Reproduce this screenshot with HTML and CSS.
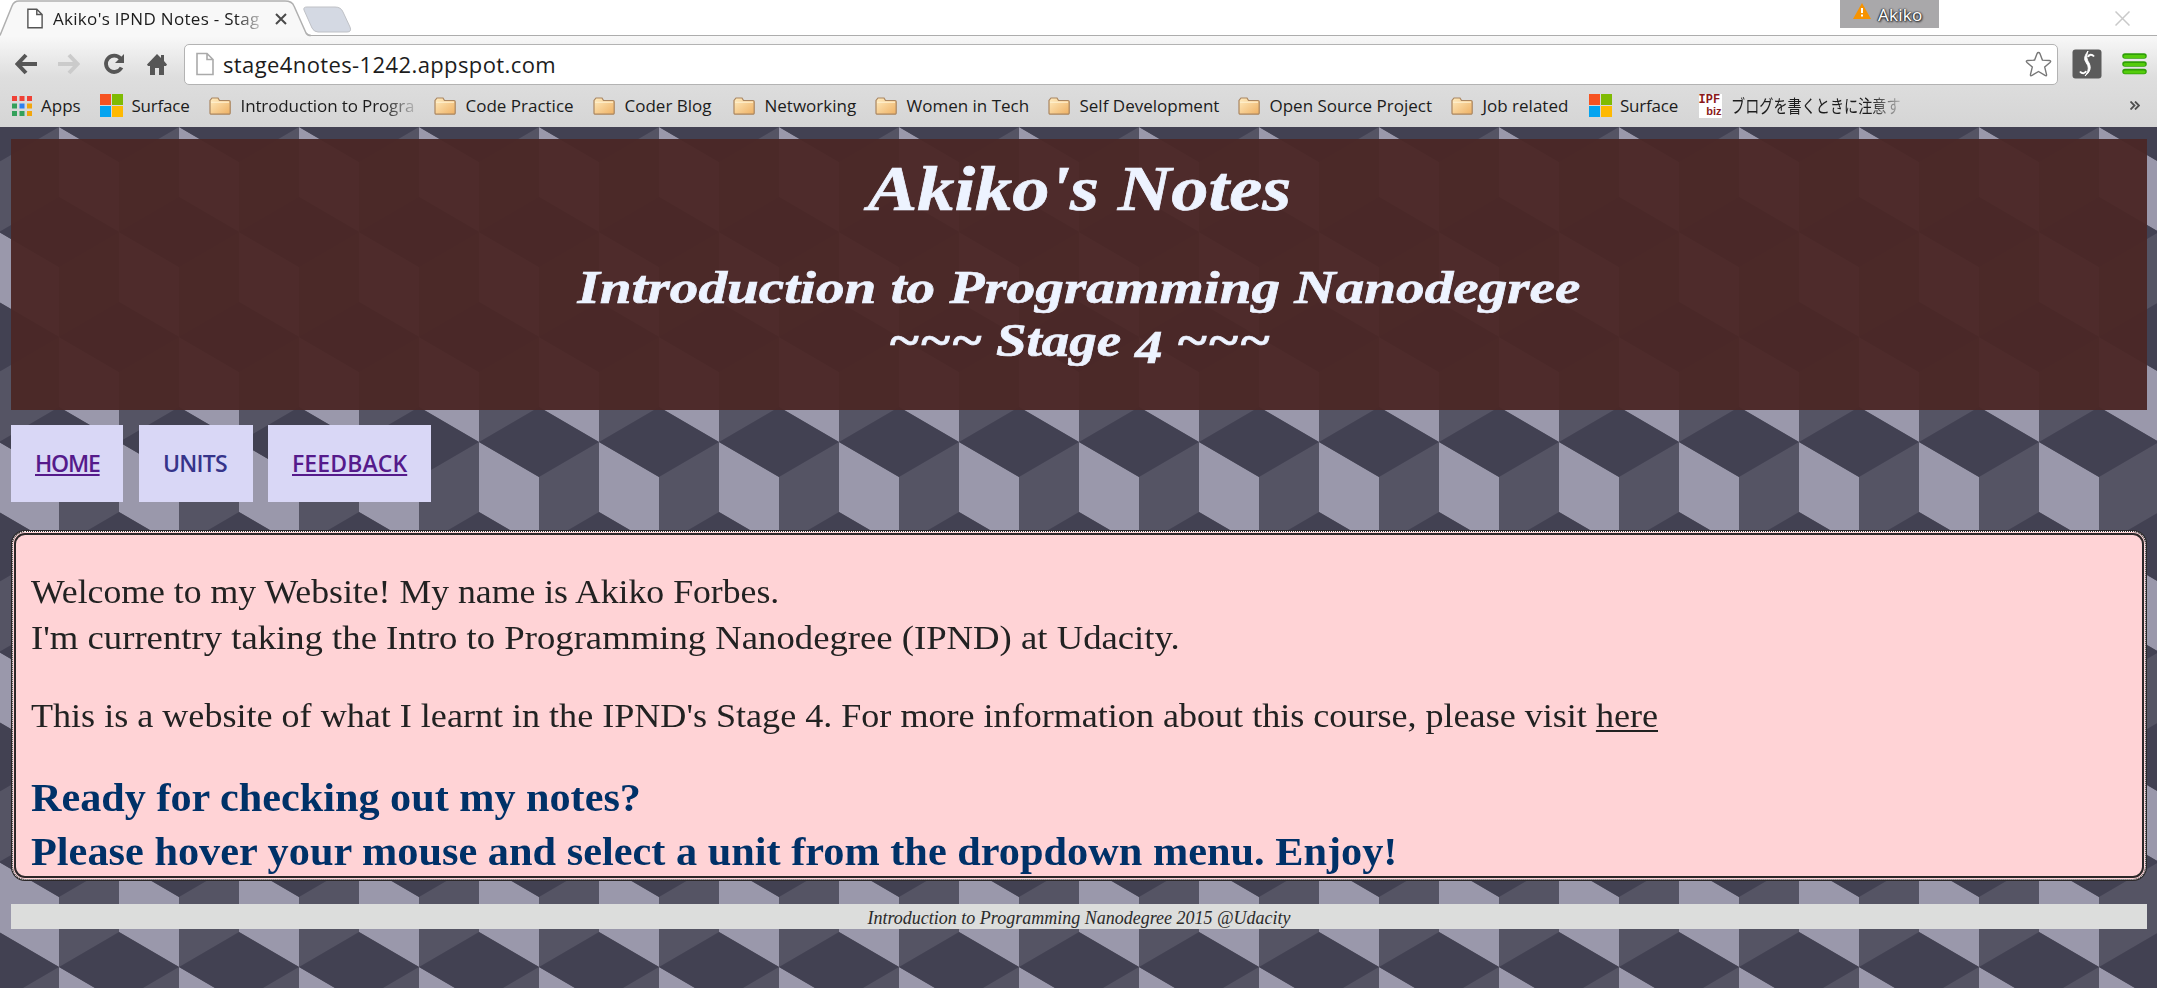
FILE: index.html
```
<!DOCTYPE html>
<html lang="en">
<head>
<meta charset="utf-8">
<title>Akiko's IPND Notes - Stage 4</title>
<link rel="stylesheet" href="styles.css">
</head>
<body>
<svg width="0" height="0" class="defs">
  <defs>
    <linearGradient id="fold" x1="0" y1="0" x2="1" y2="1"><stop offset="0" stop-color="#ffecc0"/><stop offset="1" stop-color="#eeb063"/></linearGradient>
    <symbol id="folder" viewBox="0 0 22 18"><path d="M1 16V3.5L3 1h6l1.5 2.5H20a1.2 1.2 0 0 1 1.2 1.2V16a1.2 1.2 0 0 1-1.2 1.2H2.2A1.2 1.2 0 0 1 1 16z" fill="url(#fold)" stroke="#a98560" stroke-width="1.2"/><path d="M2 5.2h18" stroke="#fff3d5" stroke-width="1"/></symbol>
    <symbol id="windows" viewBox="0 0 23 23"><path fill="#f65321" d="M0 0h11v11H0z"/><path fill="#7fbb03" d="M12 0h11v11H12z"/><path fill="#04a4f0" d="M0 12h11v11H0z"/><path fill="#feb902" d="M12 12h11v11H12z"/></symbol>
    <symbol id="page" viewBox="0 0 18 23"><path d="M1 1h10l6 6v15H1z M11 1v6h6" fill="#fff" stroke="currentColor" stroke-width="1.6"/></symbol>
  </defs>
</svg>

<div class="tabstrip">
  <svg class="tabshape" width="356" height="37" viewBox="0 0 356 37">
    <path d="M304 10q-1-3 3-3h28q6 0 8 5l7 15q2 5-3 5h-29q-4 0-6-4z" fill="#d4d9e3" stroke="#bfc1c6" stroke-width="1"/>
    <path d="M0 37V35.500L12 6q2-5 7-5h266q7 0 9 5l12 27q1.500 2.500 5 2.500V37z" fill="#f8f8f8"/>
    <path d="M0 35.500L12 6q2-5 7-5h266q7 0 9 5l12 27q1.500 2.500 5 2.500" fill="none" stroke="#b0b0b0" stroke-width="1.500"/>
  </svg>
  <div class="tab">
    <svg class="tabicon" width="16" height="21"><use href="#page"/></svg>
    <span class="tabtitle">Akiko's IPND Notes - Stag</span>
    <svg width="12" height="12" viewBox="0 0 12 12"><path d="M1 1l10 10M11 1L1 11" stroke="#4a4a4a" stroke-width="2"/></svg>
  </div>
  <div class="profile">
    <svg width="18" height="16" viewBox="0 0 18 16"><path d="M9 0l9 16H0z" fill="#f79300"/><path d="M9 5v5M9 11.500v2" stroke="#fff" stroke-width="2"/></svg>
    <span>Akiko</span>
  </div>
  <svg class="winclose" width="15" height="15" viewBox="0 0 15 15"><path d="M.5.5l14 14M14.500.5l-14 14" stroke="#c9c9c9" stroke-width="1.500"/></svg>
</div>

<div class="chrome">
  <div class="toolbar">
    <svg width="23" height="22" viewBox="0 0 23 22"><path d="M22 11H3M11 2L2.500 11l8.500 9" fill="none" stroke="#565656" stroke-width="4"/></svg>
    <svg width="23" height="22" viewBox="0 0 23 22"><path d="M1 11h19M12 2l8.500 9-8.500 9" fill="none" stroke="#cbcbcb" stroke-width="4"/></svg>
    <svg width="22" height="22" viewBox="0 0 22 22"><path d="M17.500 5.500A8.200 8.200 0 1 0 18.500 14.500" fill="none" stroke="#565656" stroke-width="3.800"/><path d="M21 1v9h-9z" fill="#565656"/></svg>
    <svg width="20" height="21" viewBox="0 0 20 21"><path d="M10 0l4 4V1h3v6l3 3.500-1 1.500h-2v9h-5v-7H8v7H3v-9H1l-1-1.500z" fill="#565656"/></svg>
    <div class="omnibox">
      <svg class="pageicon" width="18" height="24"><use href="#page"/></svg>
      <span class="url">stage4notes-1242.appspot.com</span>
      <svg class="star" width="27" height="27" viewBox="0 0 27 27"><path d="M13.500 1.500q1 0 1.400 1l2.500 6.600 7 .4q2.200.3.600 1.900l-5.300 4.700 1.800 7.200q.4 2-1.500 1.100L13.500 20.500 7 24.400q-1.900.9-1.500-1.100l1.800-7.200L2 11.400Q.4 9.800 2.600 9.500l7-.4 2.500-6.600q.4-1 1.400-1z" fill="#fff" stroke="#777" stroke-width="1.400"/></svg>
    </div>
    <svg class="ext" width="30" height="30" viewBox="0 0 30 30"><rect x=".5" y=".5" width="29" height="29" rx="3" fill="#5b5b5b"/><path d="M16 2c-5 7-3.500 9-1 13s1 8-2 12c5-4 6.500-8 4-13-2.300-4-3-6-1-12z" fill="#fff" stroke="#fff"/><path d="M16 8c1-3 4-3 6-.5M14 22c-1 3-4 3-6 .5" stroke="#fff" stroke-width="2" fill="none"/></svg>
    <svg width="25" height="22" viewBox="0 0 25 22"><path d="M3 3h19M3 11h19M3 18.500h19" stroke="#2f9e07" stroke-width="5.500" stroke-linecap="round"/><path d="M3 3.500h19M3 11.500h19M3 19h19" stroke="#55cc0c" stroke-width="3" stroke-linecap="round"/></svg>
  </div>

  <div class="bookmarks">
    <div class="bm apps"><svg width="20" height="20" viewBox="0 0 20 20"><path fill="#ef4136" d="M0 0h5v5H0zM7.500 0h5v5h-5zM15 0h5v5h-5z"/><path fill="#34a05a" d="M0 7.500h5v5H0zM0 15h5v5H0zM7.500 15h5v5h-5z"/><path fill="#2d7ff0" d="M7.500 7.500h5v5h-5z"/><path fill="#f2a60d" d="M15 7.500h5v5h-5zM15 15h5v5h-5z"/></svg>Apps</div>
    <div class="bm win"><svg width="23" height="23"><use href="#windows"/></svg>Surface</div>
    <div class="bm"><svg width="22" height="18"><use href="#folder"/></svg><span class="fade intro">Introduction to Progra</span></div>
    <div class="bm"><svg width="22" height="18"><use href="#folder"/></svg>Code Practice</div>
    <div class="bm"><svg width="22" height="18"><use href="#folder"/></svg>Coder Blog</div>
    <div class="bm"><svg width="22" height="18"><use href="#folder"/></svg>Networking</div>
    <div class="bm"><svg width="22" height="18"><use href="#folder"/></svg>Women in Tech</div>
    <div class="bm"><svg width="22" height="18"><use href="#folder"/></svg>Self Development</div>
    <div class="bm"><svg width="22" height="18"><use href="#folder"/></svg>Open Source Project</div>
    <div class="bm"><svg width="22" height="18"><use href="#folder"/></svg>Job related</div>
    <div class="bm win"><svg width="23" height="23"><use href="#windows"/></svg>Surface</div>
    <div class="bm"><span class="ipf"><b>IPF</b><b class="biz">biz</b></span><span class="fade jp">ブログを書くときに注意す</span></div>
    <svg class="more" width="10" height="9" viewBox="0 0 10 9"><path d="M.5.5l4 4-4 4M5 .5l4 4-4 4" fill="none" stroke="#4f4f4f" stroke-width="1.800"/></svg>
  </div>
</div>

<main class="site">
  <header class="banner">
    <h1><span class="sx-title">Akiko's Notes</span></h1>
    <h2><span class="sx-course">Introduction to Programming Nanodegree</span><br><span class="sx-stage">~~~ Stage <span class="old">4</span> ~~~</span></h2>
  </header>
  <nav class="menu">
    <div class="item home"><a>HOME</a></div>
    <div class="item units"><span>UNITS</span></div>
    <div class="item feedback"><a>FEEDBACK</a></div>
  </nav>
  <section class="panel">
    <p><span class="l1">Welcome to my Website! My name is Akiko Forbes.</span><br><span class="l2">I'm currentry taking the Intro to Programming Nanodegree (IPND) at Udacity.</span></p>
    <p><span class="l3">This is a website of what I learnt in the IPND's Stage 4. For more information about this course, please visit <u>here</u></span></p>
    <h3><span class="l4">Ready for checking out my notes?</span><br><span class="l5">Please hover your mouse and select a unit from the dropdown menu. Enjoy!</span></h3>
  </section>
  <footer class="foot">Introduction to Programming Nanodegree 2015 @Udacity</footer>
</main>
</body>
</html>
```
FILE: styles.css
```
* { box-sizing: border-box; }
body { margin: 0; width: 2157px; height: 988px; overflow: hidden; display: flex; flex-direction: column; background: #fff; font-family: "Open Sans", sans-serif; color: #1c1c1c; }
svg { display: block; flex: none; }
.defs { position: absolute; }

.tabstrip { height: 36px; flex: none; display: flex; position: relative; border-bottom: 1.5px solid #adadad; }
.tabshape { position: absolute; left: 0; top: 0; }
.tab { position: relative; display: flex; align-items: center; width: 300px; height: 37px; padding-left: 27px; }
.tabicon { color: #555; }
.tabtitle { width: 213px; margin: 0 9px 0 10px; font-size: 17px; letter-spacing: .3px; white-space: nowrap; overflow: hidden; mask-image: linear-gradient(90deg, #000 86%, rgba(0,0,0,.25) 97%); }
.profile { margin-left: 1540px; width: 99px; height: 28px; background: #a9a8aa; display: flex; align-items: center; padding: 0 0 0 13px; gap: 7px; color: #fff; font-size: 17px; letter-spacing: .3px; text-shadow: 0 0 2px #222, 1px 1px 2px #222, -1px 0 1px #444; }
.profile svg { margin-bottom: 6px; }
.profile span { padding-top: 1px; }
.winclose { margin: 11px 0 0 176px; }

.chrome { height: 91px; flex: none; background: linear-gradient(#f8f8f8, #dedede 45%, #d5d5d5); display: flex; flex-direction: column; }
.toolbar { display: flex; align-items: center; height: 56px; padding: 0 10px 0 15px; }
.toolbar > svg:nth-child(2) { margin-left: 19px; }
.toolbar > svg:nth-child(3) { margin-left: 23px; }
.toolbar > svg:nth-child(4) { margin-left: 22px; }
.omnibox { display: flex; align-items: center; width: 1875px; height: 41px; margin: 0 14px 0 17px; padding: 0 5px 0 11px; background: #fff; border: 1px solid #b3b3b3; border-radius: 5px; }
.pageicon { color: #aaa; }
.url { flex: 1; margin-left: 9px; font-size: 22px; letter-spacing: .39px; line-height: 38px; }
.toolbar .ext { margin-right: 20px; }

.bookmarks { display: grid; grid-template-columns: 88px 109px 225px 159px 140px 142px 173px 190px 213px 137.5px 110px 431.500px auto; align-items: center; height: 27px; padding: 0 0 0 12px; font-size: 17px; white-space: nowrap; }
.bm { display: flex; align-items: center; height: 25px; gap: 9.5px; line-height: 25px; }
.bm.apps { gap: 9px; }
.bm.win { gap: 8.5px; letter-spacing: -.2px; }
.fade { mask-image: linear-gradient(90deg, #000 82%, rgba(0,0,0,.2) 100%); }
.intro { letter-spacing: -.12px; }
.jp { font-family: "Noto Sans CJK JP", sans-serif; font-size: 18px; transform: scaleX(.785); transform-origin: left; }
.ipf { width: 23px; height: 24px; background: #fff; color: #8a1a1a; font-family: "Liberation Mono", monospace; font-size: 12px; line-height: 12px; display: flex; flex-direction: column; }
.ipf .biz { font-family: "Liberation Sans", sans-serif; align-self: flex-end; font-size: 11px; line-height: 11px; }

.site { flex: 1; padding: 12px 10px 0 11px; background: url("data:image/svg+xml,%3Csvg xmlns='http://www.w3.org/2000/svg' width='120' height='210'%3E%3Cpath fill='%23555464' d='M0 0h120v210H0z'/%3E%3Cpath fill='%239a98ab' d='M0 105l60 35v70L0 175zM60 0l60 35v70L60 70z'/%3E%3Cpath fill='%23424152' d='M0 105l60-35 60 35-60 35zM-60 0H60L0 35zM60 0h120l-60 35zM0 175l60 35H-60zM120 175l60 35H60z'/%3E%3C/svg%3E") -1px 0; }
.banner { height: 271px; padding-top: 15px; background: rgba(75,39,38,.965); color: #edf3ff; text-align: center; font-family: "Liberation Serif", serif; font-style: italic; -webkit-text-stroke: .7px #edf3ff; }
.banner h1, .banner h2, .panel h3, .panel p { margin: 0; }
.banner h1 { font-size: 63px; line-height: 70px; }
.banner h2 { margin-top: 37px; font-size: 47px; line-height: 52.5px; }
.banner h1 > span, .banner h2 > span, .panel p > span, .panel h3 > span { display: inline-block; white-space: nowrap; }
.sx-title { transform: scaleX(1.18); }
.sx-course { transform: scaleX(1.217); }
.sx-stage { transform: scaleX(1.17); }
.old { vertical-align: -7px; line-height: 0; }

.menu { display: flex; margin-top: 15px; height: 77px; font-size: 23px; font-weight: 600; color: #36348a; }
.item { background: #d9d7f6; padding: 0 0 1px 24px; line-height: 76px; }
.home { width: 112px; letter-spacing: -1.2px; }
.units { width: 114px; margin-left: 16px; letter-spacing: -.75px; }
.feedback { width: 163px; margin-left: 15px; letter-spacing: .1px; }
.item a { color: #551a8b; text-decoration: underline; text-decoration-thickness: 2px; text-underline-offset: 2px; }

.panel { height: 351px; margin-top: 28px; padding: 34px 0 0 15px; border: 5px double #2b2728; border-radius: 14px; outline: 1px dotted #fff; outline-offset: -2px; background: #ffd3d6; font-family: "Liberation Serif", serif; color: #222; }
.panel span { transform-origin: left; }
.panel p { font-size: 33px; line-height: 46px; }
.panel p + p { margin-top: 31.5px; }
.panel h3 { margin-top: 32.5px; font-size: 40px; line-height: 54px; color: #003168; }
.l1 { transform: scaleX(1.082); }
.l2 { transform: scaleX(1.112); }
.l3 { transform: scaleX(1.0935); }
.l4 { transform: scaleX(1.055); }
.l5 { transform: scaleX(1.058); }
.panel u { text-decoration-thickness: 2px; text-underline-offset: 3px; }

.foot { height: 25px; margin-top: 23px; background: #dcdddc; text-align: center; font: italic 18px/28px "Liberation Serif", serif; color: #2a2a2a; }
```
